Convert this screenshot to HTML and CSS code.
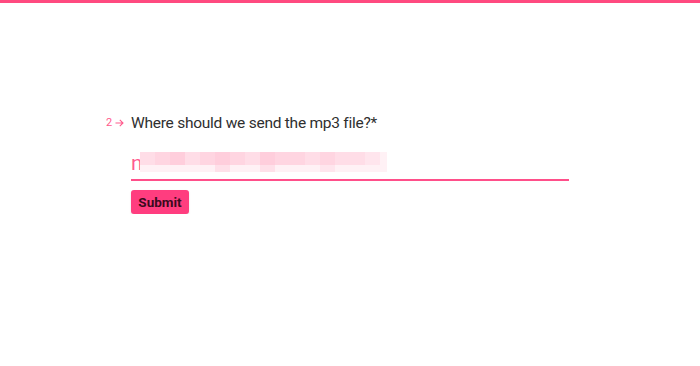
FILE: index.html
```html
<!DOCTYPE html>
<html lang="en">
<head>
<meta charset="utf-8">
<title>Where should we send the mp3 file?</title>
<link rel="stylesheet" href="styles.css">
</head>
<body>
<div class="topbar"></div>
<main class="form">
  <div class="question">
    <div class="qnum"><span>2</span><svg class="arrow" width="9" height="8" viewBox="0 0 9 8"><path d="M0.5 4H8M4.8 0.8L8 4L4.8 7.2" fill="none" stroke="currentColor" stroke-width="1.1"/></svg></div>
    <div class="qbody">
      <h1 class="qtitle">Where should we send the mp3 file?*</h1>
      <div class="field">
        <span class="value">n</span>
        <div class="blur">
          <div class="row top">
            <i class="a"></i><i class="b"></i><i class="c"></i><i class="a"></i><i class="b"></i><i class="c"></i><i class="b"></i><i class="a"></i><i class="c"></i><i class="b"></i><i class="b"></i><i class="a"></i><i class="b"></i><i class="a"></i><i class="a"></i><i class="d"></i><i class="e"></i>
          </div>
          <div class="row bottom">
            <i class="e"></i><i class="e"></i><i class="e"></i><i class="e"></i><i class="e"></i><i class="f"></i><i class="e"></i><i class="e"></i><i class="f"></i><i class="e"></i><i class="e"></i><i class="e"></i><i class="d"></i><i class="e"></i><i class="e"></i><i class="e"></i><i class="e"></i>
          </div>
        </div>
      </div>
      <button class="submit" type="button">Submit</button>
    </div>
  </div>
</main>
</body>
</html>
```
FILE: styles.css
```css
html, body {
  margin: 0;
  padding: 0;
  background: #ffffff;
}
body {
  font-family: Roboto, "Noto Sans", sans-serif;
  color: #333333;
}
.topbar {
  height: 3px;
  background: #ff4a80;
}
.form {
  padding: 108px 0 0 106px;
}
.question {
  display: flex;
}
.qnum {
  width: 25px;
  display: flex;
  align-items: center;
  gap: 3px;
  height: 24px;
  color: #ff5a8c;
  font-size: 11px;
  line-height: 24px;
}
.arrow {
  display: block;
}
.qbody {
  width: 438px;
}
.qtitle {
  margin: 0;
  font-size: 15.5px;
  font-weight: 400;
  letter-spacing: -0.25px;
  line-height: 24px;
  color: #2f2f2f;
}
.field {
  position: relative;
  margin-top: 13px;
  height: 31px;
  border-bottom: 2px solid #ff4f8a;
}
.value {
  display: block;
  font-size: 21px;
  line-height: 31px;
  color: #ff5a8e;
}
.blur {
  position: absolute;
  left: 9px;
  top: 4px;
  display: flex;
  flex-direction: column;
}
.row {
  display: grid;
  grid-template-columns: repeat(16, 15px) 7px;
}
.row.top { height: 13px; }
.row.bottom { height: 7px; }
.row i { display: block; }
.a { background: #ffdde7; }
.b { background: #ffd5e1; }
.c { background: #ffcedc; }
.d { background: #ffe5ed; }
.e { background: #fff1f5; }
.f { background: #ffe0e9; }
.submit {
  margin-top: 9px;
  width: 58px;
  height: 24px;
  padding: 0;
  border: none;
  border-radius: 3px;
  background: #ff3d7f;
  color: #3b0a1d;
  font-family: Roboto, "Noto Sans", sans-serif;
  font-size: 13.5px;
  font-weight: 700;
  box-shadow: 0 1px 2px rgba(0,0,0,0.12);
  cursor: pointer;
}
```
